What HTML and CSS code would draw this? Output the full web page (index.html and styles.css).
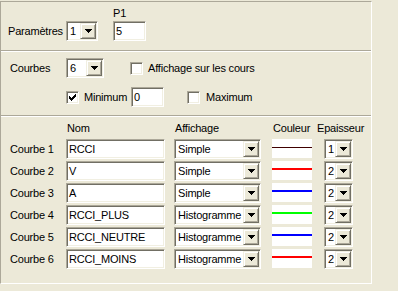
FILE: index.html
```html
<html>
<head>
<title>Courbes</title>
<link rel="stylesheet" href="styles.css">
</head>
<body>
<div class="panel">

  <div class="section params">
    <span class="head p1">P1</span>
    <span class="lbl">Paramètres</span>
    <div class="combo w32"><span class="val">1</span><span class="btn"><svg width="7" height="4"><path d="M0 0h7v1h-1v1h-1v1h-1v1h-1v-1h-1v-1h-1v-1h-1z"/></svg></span></div>
    <div class="field w33">5</div>
  </div>

  <div class="section courbes">
    <div class="row row1">
      <span class="lbl lbl-courbes">Courbes</span>
      <div class="combo w38"><span class="val">6</span><span class="btn"><svg width="7" height="4"><path d="M0 0h7v1h-1v1h-1v1h-1v1h-1v-1h-1v-1h-1v-1h-1z"/></svg></span></div>
      <span class="check cb-aff"></span>
      <span class="lbl cb-text">Affichage sur les cours</span>
    </div>
    <div class="row row2">
      <span class="check"><svg width="7" height="7"><path d="M6 0h1v1h-1zM5 1h2v1h-2zM0 2h1v1h-1zM4 2h3v1h-3zM0 3h2v1h-2zM3 3h3v1h-3zM0 4h5v1h-5zM1 5h3v1h-3zM2 6h1v1h-1z"/></svg></span>
      <span class="lbl cb-text lbl-min">Minimum</span>
      <div class="field w33">0</div>
      <span class="check cb-max"></span>
      <span class="lbl cb-text2">Maximum</span>
    </div>
  </div>

  <div class="section curves">
    <span></span>
    <span class="head">Nom</span>
    <span class="head">Affichage</span>
    <span class="head">Couleur</span>
    <span class="head">Epaisseur</span>

    <span class="lbl">Courbe 1</span>
    <div class="field w99">RCCI</div>
    <div class="combo w87"><span class="val">Simple</span><span class="btn"><svg width="7" height="4"><path d="M0 0h7v1h-1v1h-1v1h-1v1h-1v-1h-1v-1h-1v-1h-1z"/></svg></span></div>
    <div class="color"><div class="ln ln1" style="background:#400000"></div></div>
    <div class="combo w29"><span class="val">1</span><span class="btn"><svg width="7" height="4"><path d="M0 0h7v1h-1v1h-1v1h-1v1h-1v-1h-1v-1h-1v-1h-1z"/></svg></span></div>

    <span class="lbl">Courbe 2</span>
    <div class="field w99">V</div>
    <div class="combo w87"><span class="val">Simple</span><span class="btn"><svg width="7" height="4"><path d="M0 0h7v1h-1v1h-1v1h-1v1h-1v-1h-1v-1h-1v-1h-1z"/></svg></span></div>
    <div class="color"><div class="ln ln2" style="background:#ff0000"></div></div>
    <div class="combo w29"><span class="val">2</span><span class="btn"><svg width="7" height="4"><path d="M0 0h7v1h-1v1h-1v1h-1v1h-1v-1h-1v-1h-1v-1h-1z"/></svg></span></div>

    <span class="lbl">Courbe 3</span>
    <div class="field w99">A</div>
    <div class="combo w87"><span class="val">Simple</span><span class="btn"><svg width="7" height="4"><path d="M0 0h7v1h-1v1h-1v1h-1v1h-1v-1h-1v-1h-1v-1h-1z"/></svg></span></div>
    <div class="color"><div class="ln ln2" style="background:#0000ff"></div></div>
    <div class="combo w29"><span class="val">2</span><span class="btn"><svg width="7" height="4"><path d="M0 0h7v1h-1v1h-1v1h-1v1h-1v-1h-1v-1h-1v-1h-1z"/></svg></span></div>

    <span class="lbl">Courbe 4</span>
    <div class="field w99">RCCI_PLUS</div>
    <div class="combo w87"><span class="val">Histogramme</span><span class="btn"><svg width="7" height="4"><path d="M0 0h7v1h-1v1h-1v1h-1v1h-1v-1h-1v-1h-1v-1h-1z"/></svg></span></div>
    <div class="color"><div class="ln ln2" style="background:#00ff00"></div></div>
    <div class="combo w29"><span class="val">2</span><span class="btn"><svg width="7" height="4"><path d="M0 0h7v1h-1v1h-1v1h-1v1h-1v-1h-1v-1h-1v-1h-1z"/></svg></span></div>

    <span class="lbl">Courbe 5</span>
    <div class="field w99">RCCI_NEUTRE</div>
    <div class="combo w87"><span class="val">Histogramme</span><span class="btn"><svg width="7" height="4"><path d="M0 0h7v1h-1v1h-1v1h-1v1h-1v-1h-1v-1h-1v-1h-1z"/></svg></span></div>
    <div class="color"><div class="ln ln2" style="background:#0000ff"></div></div>
    <div class="combo w29"><span class="val">2</span><span class="btn"><svg width="7" height="4"><path d="M0 0h7v1h-1v1h-1v1h-1v1h-1v-1h-1v-1h-1v-1h-1z"/></svg></span></div>

    <span class="lbl">Courbe 6</span>
    <div class="field w99">RCCI_MOINS</div>
    <div class="combo w87"><span class="val">Histogramme</span><span class="btn"><svg width="7" height="4"><path d="M0 0h7v1h-1v1h-1v1h-1v1h-1v-1h-1v-1h-1v-1h-1z"/></svg></span></div>
    <div class="color"><div class="ln ln2" style="background:#ff0000"></div></div>
    <div class="combo w29"><span class="val">2</span><span class="btn"><svg width="7" height="4"><path d="M0 0h7v1h-1v1h-1v1h-1v1h-1v-1h-1v-1h-1v-1h-1z"/></svg></span></div>
  </div>

</div>
</body>
</html>
```

FILE: styles.css
```css
* {
  box-sizing: border-box;
}

body {
  margin: 0;
  background-color: #ece9d8;
  font-family: "Liberation Sans", Arial, sans-serif;
  font-size: 11px;
  letter-spacing: -0.2px;
  color: #000000;
}

.panel {
  margin-top: 1px;
  width: 372px;
  border-top: 1px solid #aca899;
  border-left: 1px solid #aca899;
  border-right: 1px solid #ffffff;
  border-bottom: 1px solid #ffffff;
}

.section:not(:last-child) {
  border-bottom: 1px solid #aca899;
}

.section + .section {
  border-top: 1px solid #ffffff;
}

.lbl {
  align-self: center;
  white-space: nowrap;
}

.head {
  line-height: 13px;
  margin-left: 1px;
  white-space: nowrap;
}

/* sunken edit box */
.field {
  height: 20px;
  background: #ffffff;
  border: 1px solid;
  border-color: #aca899 #ffffff #ffffff #aca899;
  box-shadow: inset 1px 1px #716f64, inset -1px -1px #f1efe2;
  padding-left: 2px;
  line-height: 18px;
  white-space: nowrap;
}

.combo {
  display: flex;
  height: 20px;
  background: #ffffff;
  border: 1px solid;
  border-color: #aca899 #ffffff #ffffff #aca899;
  box-shadow: inset 1px 1px #716f64, inset -1px -1px #f1efe2;
}

.combo .val {
  flex: 1;
  padding-left: 3px;
  line-height: 18px;
  white-space: nowrap;
  overflow: hidden;
}

.combo .btn {
  width: 16px;
  height: 16px;
  margin: 1px;
  background: #ece9d8;
  border: 1px solid;
  border-color: #f1efe2 #716f64 #716f64 #f1efe2;
  box-shadow: inset 1px 1px #ffffff, inset -1px -1px #aca899;
  display: flex;
  align-items: center;
  justify-content: center;
}

.combo .btn svg {
  display: block;
  shape-rendering: crispEdges;
}

.w29 { width: 29px; }
.w32 { width: 32px; }
.w33 { width: 33px; }
.w38 { width: 38px; }
.w87 { width: 87px; }
.w99 { width: 99px; }

.check {
  width: 13px;
  height: 13px;
  background: #ffffff;
  border: 1px solid;
  border-color: #aca899 #ffffff #ffffff #aca899;
  box-shadow: inset 1px 1px #716f64, inset -1px -1px #f1efe2;
  padding: 2px 0 0 2px;
}

.check svg {
  display: block;
  shape-rendering: crispEdges;
}

/* parametres */
.params {
  display: grid;
  grid-template-columns: 58px 47px auto;
  grid-template-rows: 13px 20px;
  row-gap: 1px;
  padding: 5px 0 9px 7px;
}

.params .p1 {
  grid-column: 3;
  grid-row: 1;
  margin-left: 0;
}

.params .lbl,
.params .combo,
.params .field {
  grid-row: 2;
}

/* courbes */
.courbes {
  padding: 6px 0 8px 0;
}

.row {
  display: flex;
  align-items: center;
  height: 20px;
}

.row1 {
  padding-left: 9px;
}

.row2 {
  margin-top: 9px;
  padding-left: 65px;
}

.lbl-courbes {
  width: 56px;
}

.cb-aff {
  margin-left: 26px;
}

.cb-text {
  margin-left: 5px;
}

.lbl-min {
  width: 47px;
}

.cb-max {
  margin-left: 23px;
}

.cb-text2 {
  margin-left: 6px;
}

/* table of curves */
.curves {
  display: grid;
  grid-template-columns: 56px 108px 98px 44px auto;
  grid-template-rows: 15px repeat(6, 20px);
  row-gap: 2px;
  padding: 5px 0 14px 9px;
}

.curves .head {
  align-self: start;
}

.color {
  width: 40px;
  height: 19px;
  background: #ffffff;
}

.ln1 {
  height: 1px;
  margin-top: 8px;
}

.ln2 {
  height: 2px;
  margin-top: 7px;
}

.curves .w29 {
  margin-left: 8px;
}
```
